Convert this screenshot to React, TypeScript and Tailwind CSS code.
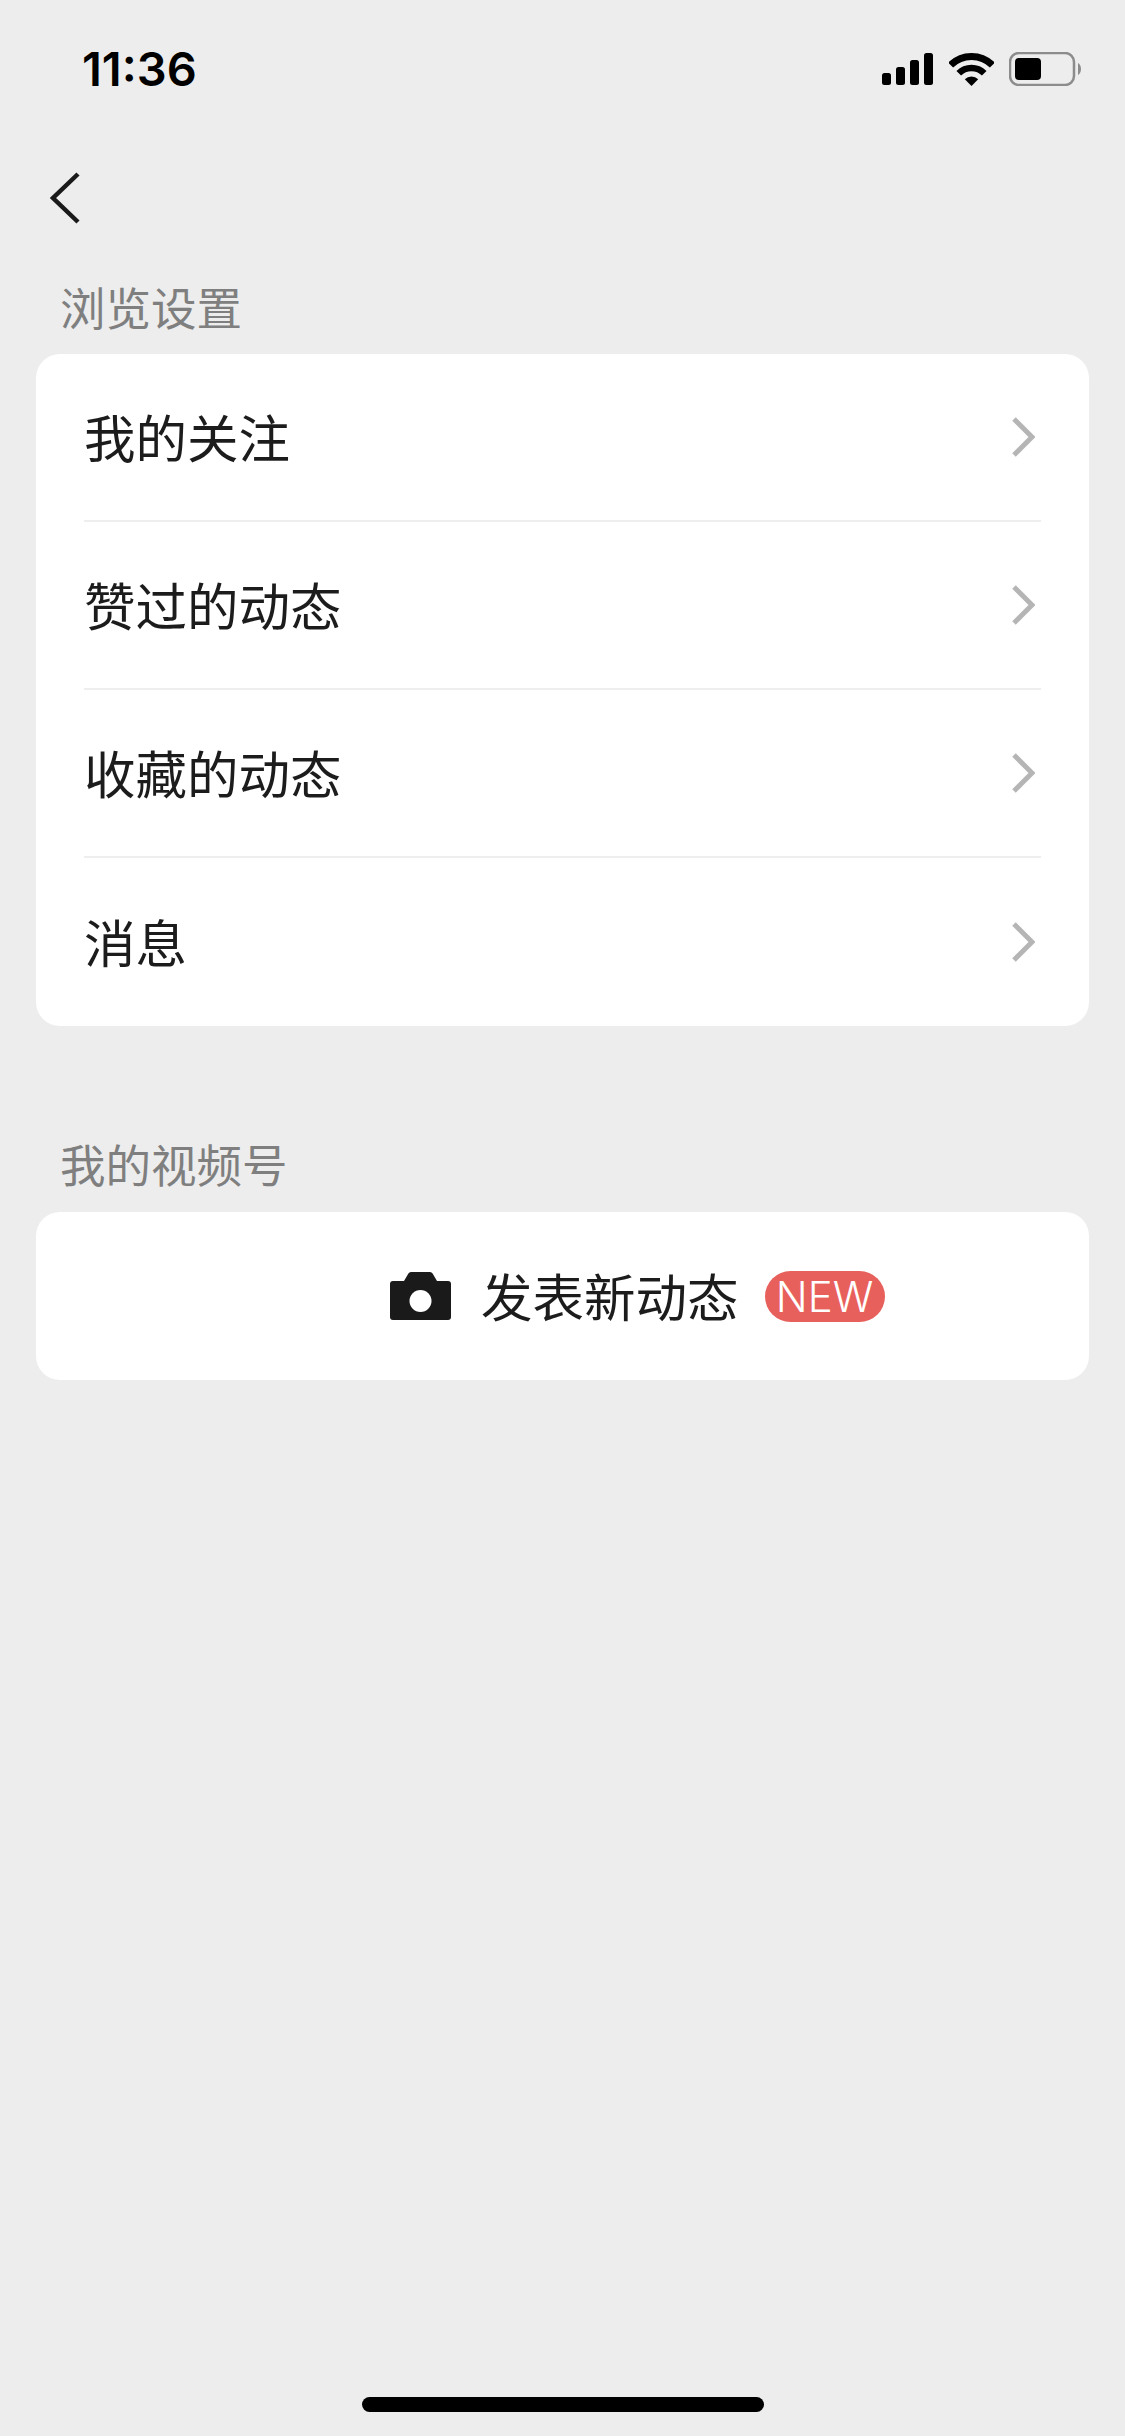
const rows = ['我的关注', '赞过的动态', '收藏的动态', '消息'];
const font = "font-['Noto_Sans_CJK_SC','Liberation_Sans',sans-serif]";

function StatusBar() {
  return (
    <div className="flex h-[138px] items-center justify-between pl-[82px] pr-[43px]">
      <span className="font-['Inter',sans-serif] text-[47px] font-semibold leading-[56px] text-black">11:36</span>
      <div className="flex items-center gap-[15px]">
        <svg width="52" height="32" viewBox="0 0 52 32">
          <rect x="0" y="20" width="9" height="12" rx="2.5" fill="#000" />
          <rect x="14" y="14" width="9" height="18" rx="2.5" fill="#000" />
          <rect x="28" y="7" width="9" height="25" rx="2.5" fill="#000" />
          <rect x="42" y="0" width="9" height="32" rx="2.5" fill="#000" />
        </svg>
        <svg width="45" height="33" viewBox="0 0 45 33">
          <path d="M22.5 33 L15.8 26.3 A9.5 9.5 0 0 1 29.2 26.3 Z" fill="#000" />
          <path d="M9.77 20.27 A18 18 0 0 1 35.23 20.27" fill="none" stroke="#000" strokeWidth="6.5" />
          <path d="M1.64 12.14 A29.5 29.5 0 0 1 43.36 12.14" fill="none" stroke="#000" strokeWidth="7" />
        </svg>
        <svg width="73" height="34" viewBox="0 0 73 34">
          <rect x="1" y="1" width="64" height="32" rx="9" fill="none" stroke="#8c8c8c" strokeWidth="2.5" />
          <rect x="6" y="6" width="26" height="22" rx="4" fill="#000" />
          <path d="M69 11 C73 13 73 21 69 23 Z" fill="#8c8c8c" />
        </svg>
      </div>
    </div>
  );
}

export default function App() {
  return (
    <div className={`flex h-[2436px] w-[1125px] flex-col overflow-hidden bg-[#ededed] ${font}`}>
      <StatusBar />
      <div className="flex h-[120px] items-center pl-[50px]">
        <svg width="30" height="54" viewBox="0 0 30 54" fill="none">
          <path d="M28 3 L3 27 L28 51" stroke="#1a1a1a" strokeWidth="4.5" />
        </svg>
      </div>
      <div className="px-[36px]">
        <div className="pl-[24px] pt-[17px] pb-[17px] text-[45.5px] leading-[62px] text-[#7f7f7f]">浏览设置</div>
        <div className="rounded-[24px] bg-white px-[48px]">
          {rows.map((r, i) => (
            <div key={r} className={`flex h-[168px] items-center justify-between ${i < 3 ? 'border-b-2 border-[#eeeeee]' : ''}`}>
              <span className="mb-[3px] text-[51.5px] leading-none text-[#1c1c1c]">{r}</span>
              <svg width="24" height="42" viewBox="0 0 24 42" fill="none" className="mr-[6px]">
                <path d="M3 3 L21 21 L3 39" stroke="#b5b5b5" strokeWidth="5" />
              </svg>
            </div>
          ))}
        </div>
        <div className="mt-[106px] mb-[18px] pl-[24px] text-[45.5px] leading-[62px] text-[#7f7f7f]">我的视频号</div>
        <div className="flex h-[168px] items-center rounded-[24px] bg-white pl-[354px]">
          <svg width="61" height="48" viewBox="0 0 61 48">
            <path d="M21 0 H40 A3 3 0 0 1 42.6 1.5 L47 9 H58 A3 3 0 0 1 61 12 V45 A3 3 0 0 1 58 48 H3 A3 3 0 0 1 0 45 V12 A3 3 0 0 1 3 9 H14 L18.4 1.5 A3 3 0 0 1 21 0 Z" fill="#1a1a1a" />
            <circle cx="30.5" cy="29" r="11" fill="#fff" />
          </svg>
          <span className="mb-[3px] ml-[30px] text-[51.5px] leading-none text-[#1c1c1c]">发表新动态</span>
          <span className="ml-[26px] flex h-[51px] w-[120px] items-center justify-center rounded-full bg-[#e8605c] font-['Inter',sans-serif] text-[42px] font-light text-white">NEW</span>
        </div>
      </div>
      <div className="mt-auto mb-[24px] flex justify-center">
        <div className="h-[15px] w-[402px] rounded-full bg-black" />
      </div>
    </div>
  );
}
